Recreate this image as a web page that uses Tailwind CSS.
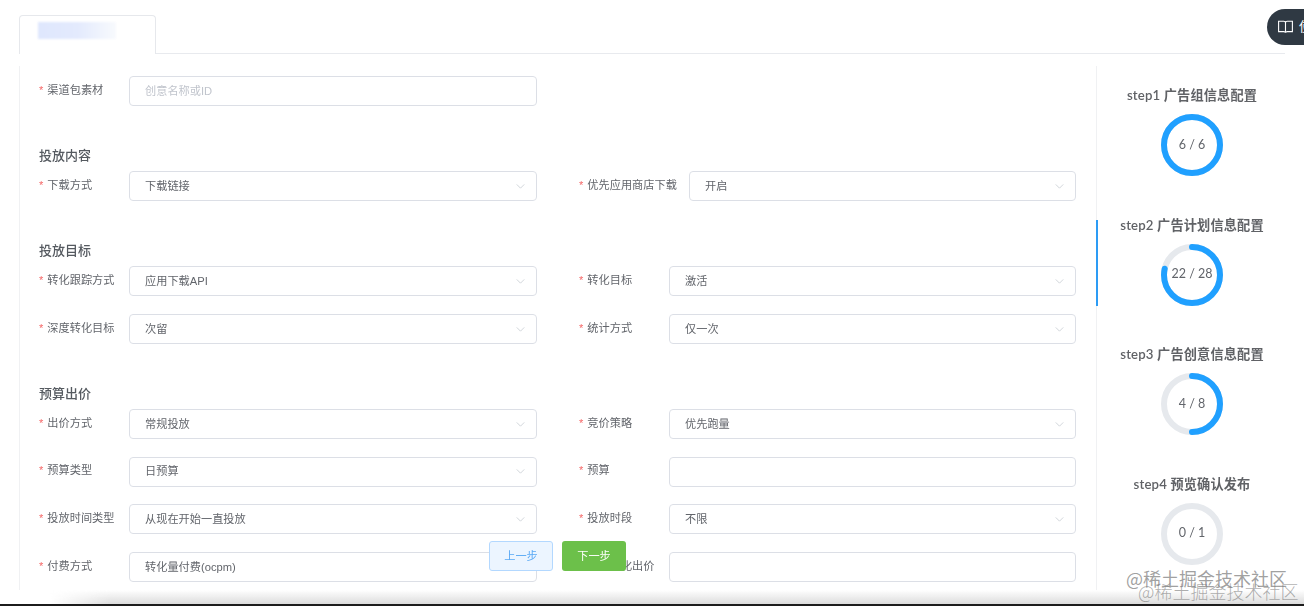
<!DOCTYPE html>
<html lang="zh">
<head>
<meta charset="utf-8">
<script src="https://cdn.jsdelivr.net/npm/@tailwindcss/browser@4"></script>
</head>
<body class="bg-white">
<div class="relative w-[1304px] h-[606px] overflow-hidden bg-white font-['Liberation_Sans','Noto_Sans_CJK_SC',sans-serif] text-[11.2px] text-[#62656b]">
  <div class="blur-[0.5px]">
    <!-- tab header -->
    <div class="ml-[19px] w-[1266px] h-[54px] pt-[15px] flex items-end">
      <div class="w-[137px] h-[39px] rounded-t-[4px] border border-b-0 border-[#e6e8ec] pl-[18px] pt-[6px] bg-white">
        <div class="w-[78px] h-[17px] bg-gradient-to-r from-[#dfe7fd] via-[#e3eafd] to-[#f8fafd] blur-[1px]"></div>
      </div>
      <div class="flex-1 border-b border-[#e8eaee]"></div>
    </div>
    <div class="flex ml-[19px] mt-[12px] h-[524px]">
      <!-- form -->
      <div class="w-[1077px] border-l border-[#f0f1f3] pl-[19px] pt-[10px]">
        <div class="grid grid-cols-[498px_497px] gap-x-[42px]">
          <div class="flex h-[30px] items-center">
            <div class="w-[90px] pb-[2px]"><span class="text-[#f56c6c] mr-[4px]">*</span>渠道包素材</div>
            <div class="flex-1 h-[30px] rounded-[4px] border border-[#dcdfe6] pl-[15px] flex items-center text-[#c0c4cc]">创意名称或ID</div>
          </div>
        </div>

        <div class="mt-[39px] mb-[6px] h-[20px] leading-[21px] text-[13px] text-[#555a60] font-medium">投放内容</div>
        <div class="grid grid-cols-[498px_497px] gap-x-[42px]">
          <div class="flex h-[30px] items-center">
            <div class="w-[90px] pb-[2px]"><span class="text-[#f56c6c] mr-[4px]">*</span>下载方式</div>
            <div class="flex-1 h-[30px] rounded-[4px] border border-[#dcdfe6] pl-[15px] pr-[11px] flex items-center justify-between">下载链接<svg class="w-[9px] h-[5px]" viewBox="0 0 10 6" fill="none" stroke="#c8ccd2"><path d="M0.5 0.5 5 5 9.5 0.5"/></svg></div>
          </div>
          <div class="flex h-[30px] items-center">
            <div class="w-[110px] pb-[2px]"><span class="text-[#f56c6c] mr-[4px]">*</span>优先应用商店下载</div>
            <div class="flex-1 h-[30px] rounded-[4px] border border-[#dcdfe6] pl-[15px] pr-[11px] flex items-center justify-between">开启<svg class="w-[9px] h-[5px]" viewBox="0 0 10 6" fill="none" stroke="#c8ccd2"><path d="M0.5 0.5 5 5 9.5 0.5"/></svg></div>
          </div>
        </div>

        <div class="mt-[39px] mb-[6px] h-[20px] leading-[21px] text-[13px] text-[#555a60] font-medium">投放目标</div>
        <div class="grid grid-cols-[498px_497px] gap-x-[42px] gap-y-[18px]">
          <div class="flex h-[30px] items-center">
            <div class="w-[90px] pb-[2px]"><span class="text-[#f56c6c] mr-[4px]">*</span>转化跟踪方式</div>
            <div class="flex-1 h-[30px] rounded-[4px] border border-[#dcdfe6] pl-[15px] pr-[11px] flex items-center justify-between">应用下载API<svg class="w-[9px] h-[5px]" viewBox="0 0 10 6" fill="none" stroke="#c8ccd2"><path d="M0.5 0.5 5 5 9.5 0.5"/></svg></div>
          </div>
          <div class="flex h-[30px] items-center">
            <div class="w-[90px] pb-[2px]"><span class="text-[#f56c6c] mr-[4px]">*</span>转化目标</div>
            <div class="flex-1 h-[30px] rounded-[4px] border border-[#dcdfe6] pl-[15px] pr-[11px] flex items-center justify-between">激活<svg class="w-[9px] h-[5px]" viewBox="0 0 10 6" fill="none" stroke="#c8ccd2"><path d="M0.5 0.5 5 5 9.5 0.5"/></svg></div>
          </div>
          <div class="flex h-[30px] items-center">
            <div class="w-[90px] pb-[2px]"><span class="text-[#f56c6c] mr-[4px]">*</span>深度转化目标</div>
            <div class="flex-1 h-[30px] rounded-[4px] border border-[#dcdfe6] pl-[15px] pr-[11px] flex items-center justify-between">次留<svg class="w-[9px] h-[5px]" viewBox="0 0 10 6" fill="none" stroke="#c8ccd2"><path d="M0.5 0.5 5 5 9.5 0.5"/></svg></div>
          </div>
          <div class="flex h-[30px] items-center">
            <div class="w-[90px] pb-[2px]"><span class="text-[#f56c6c] mr-[4px]">*</span>统计方式</div>
            <div class="flex-1 h-[30px] rounded-[4px] border border-[#dcdfe6] pl-[15px] pr-[11px] flex items-center justify-between">仅一次<svg class="w-[9px] h-[5px]" viewBox="0 0 10 6" fill="none" stroke="#c8ccd2"><path d="M0.5 0.5 5 5 9.5 0.5"/></svg></div>
          </div>
        </div>

        <div class="mt-[39px] mb-[6px] h-[20px] leading-[21px] text-[13px] text-[#555a60] font-medium">预算出价</div>
        <div class="grid grid-cols-[498px_497px] gap-x-[42px] gap-y-[17.67px]">
          <div class="flex h-[30px] items-center">
            <div class="w-[90px] pb-[2px]"><span class="text-[#f56c6c] mr-[4px]">*</span>出价方式</div>
            <div class="flex-1 h-[30px] rounded-[4px] border border-[#dcdfe6] pl-[15px] pr-[11px] flex items-center justify-between">常规投放<svg class="w-[9px] h-[5px]" viewBox="0 0 10 6" fill="none" stroke="#c8ccd2"><path d="M0.5 0.5 5 5 9.5 0.5"/></svg></div>
          </div>
          <div class="flex h-[30px] items-center">
            <div class="w-[90px] pb-[2px]"><span class="text-[#f56c6c] mr-[4px]">*</span>竞价策略</div>
            <div class="flex-1 h-[30px] rounded-[4px] border border-[#dcdfe6] pl-[15px] pr-[11px] flex items-center justify-between">优先跑量<svg class="w-[9px] h-[5px]" viewBox="0 0 10 6" fill="none" stroke="#c8ccd2"><path d="M0.5 0.5 5 5 9.5 0.5"/></svg></div>
          </div>
          <div class="flex h-[30px] items-center">
            <div class="w-[90px] pb-[2px]"><span class="text-[#f56c6c] mr-[4px]">*</span>预算类型</div>
            <div class="flex-1 h-[30px] rounded-[4px] border border-[#dcdfe6] pl-[15px] pr-[11px] flex items-center justify-between">日预算<svg class="w-[9px] h-[5px]" viewBox="0 0 10 6" fill="none" stroke="#c8ccd2"><path d="M0.5 0.5 5 5 9.5 0.5"/></svg></div>
          </div>
          <div class="flex h-[30px] items-center">
            <div class="w-[90px] pb-[2px]"><span class="text-[#f56c6c] mr-[4px]">*</span>预算</div>
            <div class="flex-1 h-[30px] rounded-[4px] border border-[#dcdfe6]"></div>
          </div>
          <div class="flex h-[30px] items-center">
            <div class="w-[90px] pb-[2px]"><span class="text-[#f56c6c] mr-[4px]">*</span>投放时间类型</div>
            <div class="flex-1 h-[30px] rounded-[4px] border border-[#dcdfe6] pl-[15px] pr-[11px] flex items-center justify-between">从现在开始一直投放<svg class="w-[9px] h-[5px]" viewBox="0 0 10 6" fill="none" stroke="#c8ccd2"><path d="M0.5 0.5 5 5 9.5 0.5"/></svg></div>
          </div>
          <div class="flex h-[30px] items-center">
            <div class="w-[90px] pb-[2px]"><span class="text-[#f56c6c] mr-[4px]">*</span>投放时段</div>
            <div class="flex-1 h-[30px] rounded-[4px] border border-[#dcdfe6] pl-[15px] pr-[11px] flex items-center justify-between">不限<svg class="w-[9px] h-[5px]" viewBox="0 0 10 6" fill="none" stroke="#c8ccd2"><path d="M0.5 0.5 5 5 9.5 0.5"/></svg></div>
          </div>
          <div class="flex h-[30px] items-center">
            <div class="w-[90px] pb-[2px]"><span class="text-[#f56c6c] mr-[4px]">*</span>付费方式</div>
            <div class="flex-1 h-[30px] rounded-[4px] border border-[#dcdfe6] pl-[15px] pr-[11px] flex items-center justify-between">转化量付费(ocpm)</div>
          </div>
          <div class="flex h-[30px] items-center">
            <div class="w-[90px] pb-[2px]"><span class="text-[#f56c6c] mr-[4px]">*</span>目标转化出价</div>
            <div class="flex-1 h-[30px] rounded-[4px] border border-[#dcdfe6]"></div>
          </div>
        </div>
      </div>
      <!-- steps -->
      <div class="w-[192px] border-l border-[#f0f1f3] pt-[24px] -mr-px font-['Lato','Noto_Sans_CJK_SC',sans-serif]">
        <div class="-ml-px w-[190px] h-[86.5px] mb-[43px] border-l-2 border-transparent flex flex-col items-center">
          <div class="-mt-px h-[13px] leading-[12px] text-[13.2px] tracking-[0.15px] font-semibold text-[#606266] whitespace-nowrap">step1 广告组信息配置</div>
          <div class="relative mt-[12px] w-[62px] h-[62px] flex items-center justify-center text-[12.5px]">
            <svg class="absolute inset-0 -rotate-90" width="62" height="62" viewBox="0 0 62 62" fill="none"><circle cx="31" cy="31" r="28" stroke="#e6e9ed" stroke-width="6"/><circle cx="31" cy="31" r="28" stroke="#20a0ff" stroke-width="6" pathLength="100" stroke-dasharray="100 100"/></svg>
            <span>6 / 6</span>
          </div>
        </div>
        <div class="-ml-px w-[190px] h-[86.5px] mb-[43px] border-l-2 border-[#2d9cf5] flex flex-col items-center">
          <div class="-mt-px h-[13px] leading-[12px] text-[13.2px] tracking-[0.15px] font-semibold text-[#606266] whitespace-nowrap">step2 广告计划信息配置</div>
          <div class="relative mt-[12px] w-[62px] h-[62px] flex items-center justify-center text-[12.5px]">
            <svg class="absolute inset-0 -rotate-90" width="62" height="62" viewBox="0 0 62 62" fill="none"><circle cx="31" cy="31" r="28" stroke="#e6e9ed" stroke-width="6"/><circle cx="31" cy="31" r="28" stroke="#20a0ff" stroke-width="6" stroke-linecap="round" pathLength="100" stroke-dasharray="78.6 100"/></svg>
            <span>22 / 28</span>
          </div>
        </div>
        <div class="-ml-px w-[190px] h-[86.5px] mb-[43px] border-l-2 border-transparent flex flex-col items-center">
          <div class="-mt-px h-[13px] leading-[12px] text-[13.2px] tracking-[0.15px] font-semibold text-[#606266] whitespace-nowrap">step3 广告创意信息配置</div>
          <div class="relative mt-[12px] w-[62px] h-[62px] flex items-center justify-center text-[12.5px]">
            <svg class="absolute inset-0 -rotate-90" width="62" height="62" viewBox="0 0 62 62" fill="none"><circle cx="31" cy="31" r="28" stroke="#e6e9ed" stroke-width="6"/><circle cx="31" cy="31" r="28" stroke="#20a0ff" stroke-width="6" stroke-linecap="round" pathLength="100" stroke-dasharray="50 100"/></svg>
            <span>4 / 8</span>
          </div>
        </div>
        <div class="-ml-px w-[190px] h-[86.5px] border-l-2 border-transparent flex flex-col items-center">
          <div class="-mt-px h-[13px] leading-[12px] text-[13.2px] tracking-[0.15px] font-semibold text-[#606266] whitespace-nowrap">step4 预览确认发布</div>
          <div class="relative mt-[12px] w-[62px] h-[62px] flex items-center justify-center text-[12.5px]">
            <svg class="absolute inset-0 -rotate-90" width="62" height="62" viewBox="0 0 62 62" fill="none"><circle cx="31" cy="31" r="28" stroke="#e6e9ed" stroke-width="6"/></svg>
            <span>0 / 1</span>
          </div>
        </div>
      </div>
    </div>
  </div>

  <!-- floating action buttons -->
  <div class="absolute left-[489px] top-[541px] flex gap-[9px] text-[11.2px] blur-[0.4px]">
    <div class="w-[64px] h-[30px] rounded-[3px] border border-[#b3d8ff] bg-[#ecf5ff] text-[#5aa9f5] flex items-center justify-center">上一步</div>
    <div class="w-[64px] h-[30px] rounded-[3px] bg-[#6cc04a] text-white flex items-center justify-center">下一步</div>
  </div>

  <!-- floating doc pill -->
  <div class="absolute left-[1267px] top-[9px] w-[60px] h-[36px] rounded-l-[18px] bg-[#2f3943] text-white flex items-center pl-[11px] gap-[6px] text-[13px] whitespace-nowrap">
    <svg class="shrink-0" width="15" height="14" viewBox="0 0 15 14" fill="none" stroke="#fff" stroke-width="1.1"><path d="M0.6 1.2h5.2c1 0 1.7.6 1.7 1.6v10c0-.8-.7-1.2-1.7-1.2H0.6zM14.4 1.2H9.2c-1 0-1.7.6-1.7 1.6v10c0-.8.7-1.2 1.7-1.2h5.2z"/></svg>
    <span>使用文档</span>
  </div>

  <!-- bottom edge of the captured window -->
  <div class="absolute left-0 right-0 bottom-[2px] h-[14px] bg-gradient-to-b from-white/0 to-[#dcdcdc] [mask-image:linear-gradient(to_right,transparent_50px,black_110px)]"></div>
  <div class="absolute left-0 right-0 bottom-0 h-[2px] bg-[#1c1c1c]"></div>

  <!-- watermarks -->
  <div class="absolute left-[1126px] top-[566px] text-[18px] leading-[24px] text-[#777]/70 font-['Noto_Sans_CJK_SC',sans-serif] whitespace-nowrap">@稀土掘金技术社区</div>
  <div class="absolute left-[1138px] top-[579px] text-[18px] leading-[24px] text-[#777]/60 font-['Noto_Sans_CJK_SC',sans-serif] font-light whitespace-nowrap">@稀土掘金技术社区</div>
</div>
</body>
</html>
